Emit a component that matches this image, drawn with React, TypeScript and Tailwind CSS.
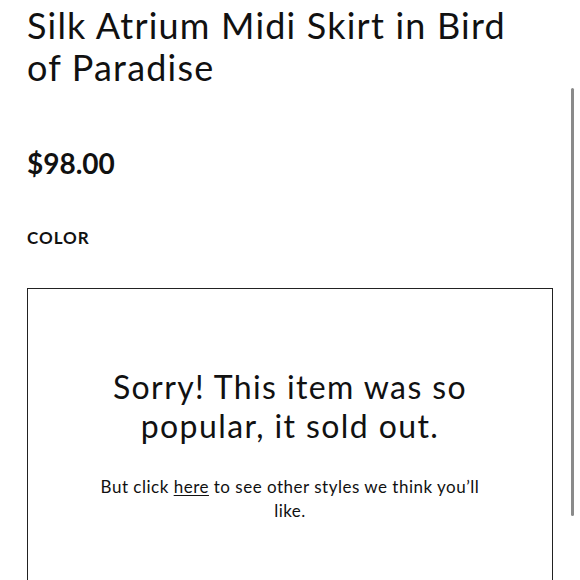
export default function App() {
  return (
    <div className="relative h-[580px] w-[580px] overflow-hidden bg-white text-[#111] font-['Lato',sans-serif]">
      <div className="px-[27px] pt-[4px]">
        <h1 className="w-[500px] text-[36px] font-normal leading-[42px] tracking-[1.2px]">
          Silk Atrium Midi Skirt in Bird of Paradise
        </h1>
        <p className="mt-[58px] text-[28px] font-bold leading-[34px]">$98.00</p>
        <p className="mt-[47px] text-[17px] font-bold leading-[22px] tracking-[1px]">COLOR</p>
        <div className="mt-[39px] h-[400px] border-[1.5px] border-[#222] px-[30px] pt-[78px] text-center">
          <p className="px-[50px] text-[32px] leading-[39px] tracking-[1.4px]">Sorry! This item was so popular, it sold out.</p>
          <p className="mt-[30px] px-[30px] text-[17px] leading-[24px] tracking-[0.5px]">
            But click <a className="underline underline-offset-2">here</a> to see other styles we think you’ll like.
          </p>
        </div>
      </div>
      <div className="absolute right-[6px] top-[88px] h-[428px] w-[3px] rounded-full bg-[#8a8a8a]" />
    </div>
  );
}
